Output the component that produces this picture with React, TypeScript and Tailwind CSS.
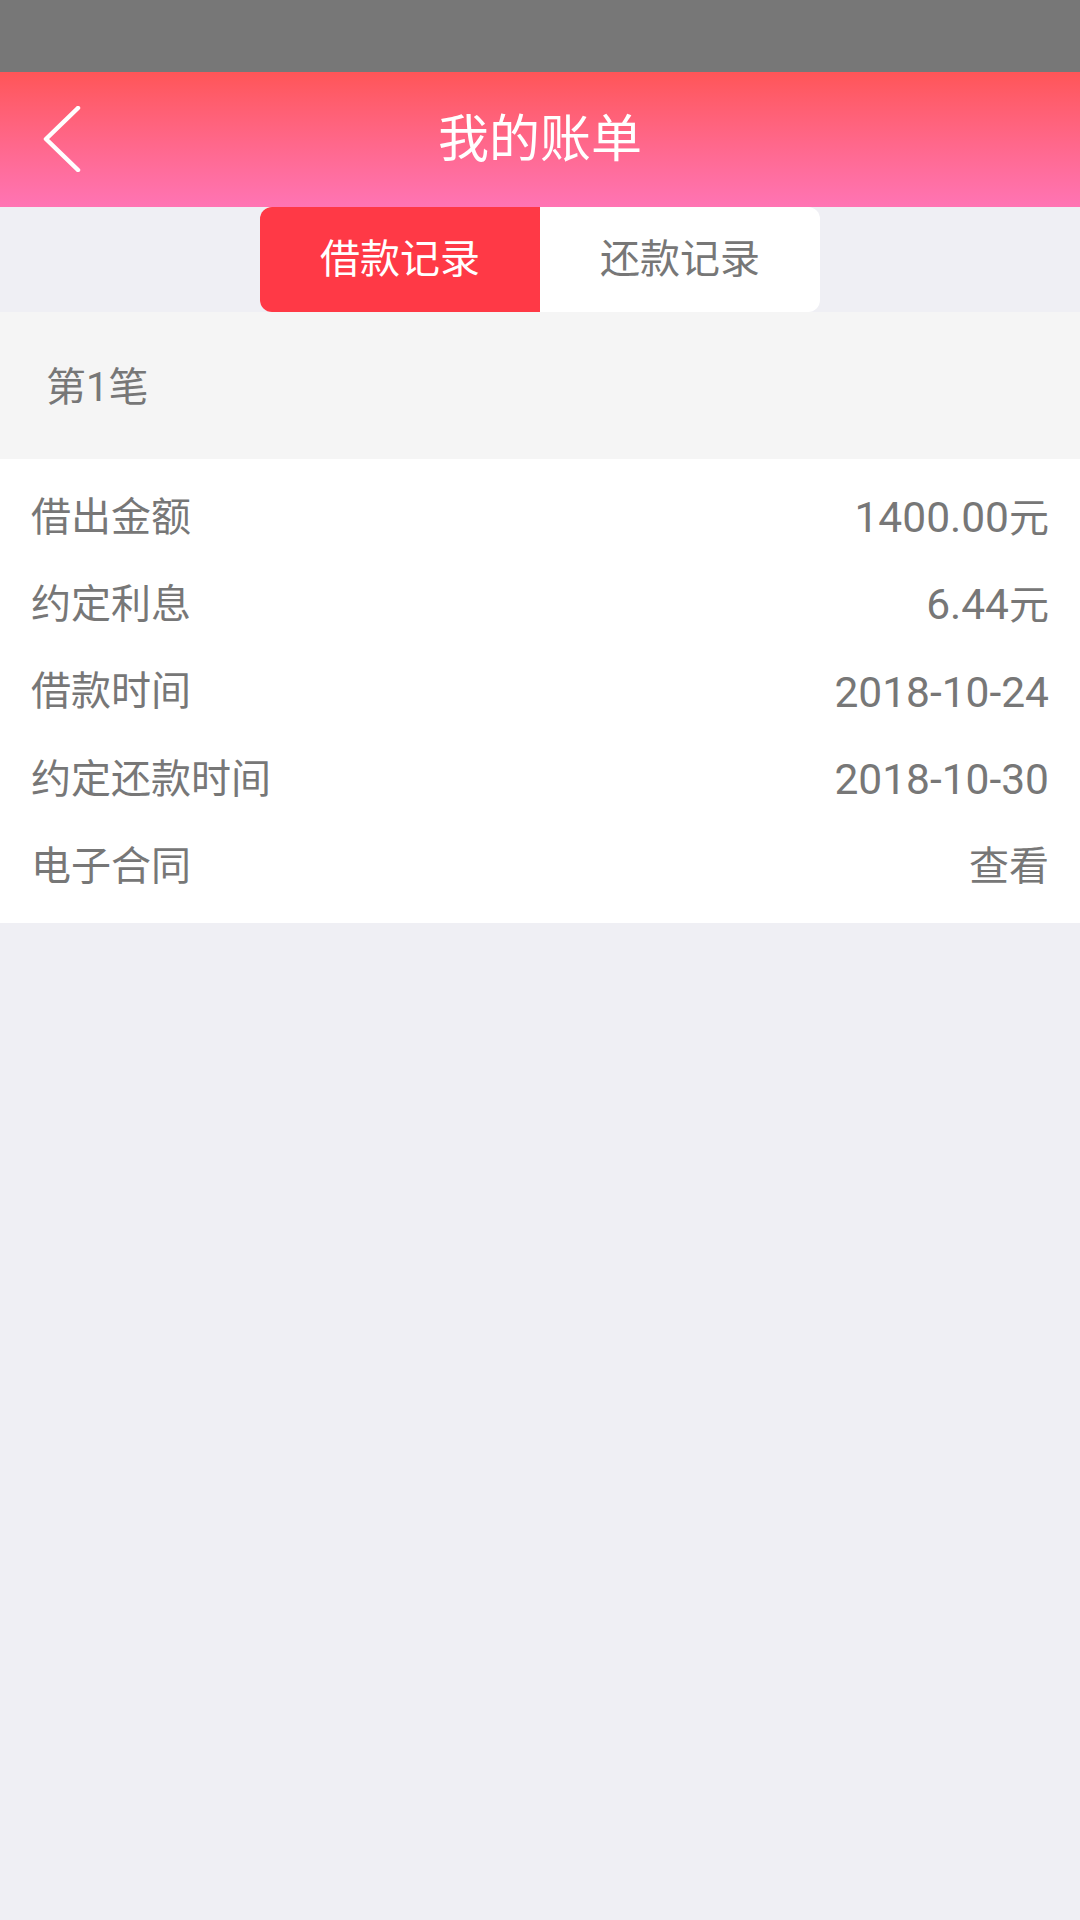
const rows: { label: string; value: string }[] = [
  { label: "借出金额", value: "1400.00元" },
  { label: "约定利息", value: "6.44元" },
  { label: "借款时间", value: "2018-10-24" },
  { label: "约定还款时间", value: "2018-10-30" },
  { label: "电子合同", value: "查看" },
];

const font = "font-['Roboto','Noto_Sans_CJK_SC',sans-serif]";

// digits run a little larger than the CJK glyphs in the reference
function Value({ text }: { text: string }) {
  const parts = text.match(/[\x00-\x7f]+|[^\x00-\x7f]+/g) ?? [];
  return (
    <span>
      {parts.map((p, i) =>
        /^[\x00-\x7f]+$/.test(p) ? (
          <span key={i} className="text-[42.5px]">
            {p}
          </span>
        ) : (
          <span key={i}>{p}</span>
        )
      )}
    </span>
  );
}

export default function App() {
  return (
    <div className={`min-h-[1920px] w-[1080px] bg-[#efeff4] ${font}`}>
      {/* status bar */}
      <div className="h-[72px] bg-[#777777]" />

      {/* header */}
      <div className="relative flex h-[135px] items-center justify-center bg-gradient-to-b from-[#ff5557] to-[#ff74b4]">
        <button className="absolute left-[40px] top-[34px]">
          <svg width="44" height="66" viewBox="0 0 44 66" fill="none">
            <path
              d="M38 2 L6 33 L38 64"
              stroke="white"
              strokeWidth="4.5"
              strokeLinecap="round"
              strokeLinejoin="round"
            />
          </svg>
        </button>
        <h1 className="text-[51px] leading-none text-white">我的账单</h1>
      </div>

      {/* tabs */}
      <div className="flex justify-center">
        <div className="flex h-[105px] w-[560px] overflow-hidden rounded-[12px] bg-white">
          <div className="flex flex-1 items-center justify-center bg-[#ff3946] text-[40px] text-white">
            借款记录
          </div>
          <div className="flex flex-1 items-center justify-center text-[40px] text-[#777777]">
            还款记录
          </div>
        </div>
      </div>

      {/* record */}
      <div className="flex h-[147px] items-center bg-[#f5f5f5] pt-[4px] pl-[46px] text-[40px] text-[#777777]">
        第1笔
      </div>
      <div className="bg-white pt-[15px] pb-[12px]">
        {rows.map((r) => (
          <div
            key={r.label}
            className="flex h-[87.4px] items-center justify-between px-[31px] text-[40px] text-[#777777]"
          >
            <span>{r.label}</span>
            <Value text={r.value} />
          </div>
        ))}
      </div>
    </div>
  );
}
